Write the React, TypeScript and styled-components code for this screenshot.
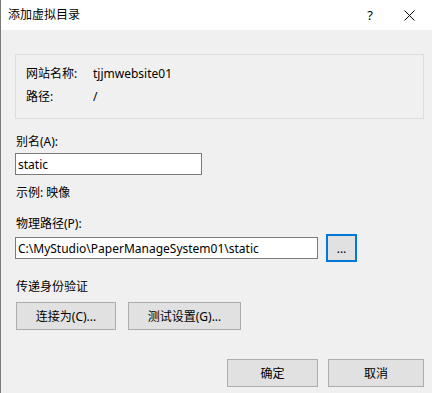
import React from "react";
import styled, { createGlobalStyle } from "styled-components";

const GlobalStyle = createGlobalStyle`
  html, body {
    margin: 0;
    padding: 0;
    background: #f0f0f0;
  }
  * {
    box-sizing: border-box;
  }
`;

const font = `"Noto Sans", "Noto Sans CJK SC", sans-serif`;

const Window = styled.div`
  width: 432px;
  height: 393px;
  background: #f0f0f0;
  border-left: 1px solid #7a7a7a;
  font-family: ${font};
  font-size: 12px;
  color: #000;
  display: flex;
  flex-direction: column;
  overflow: hidden;
`;

const TitleBar = styled.div`
  height: 30px;
  background: #fff;
  display: flex;
  align-items: center;
  padding-left: 7px;
  flex-shrink: 0;
`;

const Title = styled.div`
  flex: 1;
  font-size: 12px;
  line-height: 16px;
`;

const TitleButton = styled.div<{ $w: number }>`
  width: ${(p) => p.$w}px;
  height: 30px;
  display: flex;
  align-items: center;
  justify-content: center;
  font-size: 13px;
`;

const Body = styled.div`
  padding: 0 8px 0 14px;
  display: flex;
  flex-direction: column;
`;

const Group = styled.div`
  margin-top: 24px;
  height: 65px;
  border: 1px solid #dcdcdc;
  padding: 11px 0 0 10px;
  display: flex;
  flex-direction: column;
  gap: 7px;
`;

const InfoRow = styled.div`
  display: flex;
  line-height: 16px;
`;

const InfoLabel = styled.div`
  width: 67px;
`;

const Label = styled.div<{ $mt: number }>`
  margin-top: ${(p) => p.$mt}px;
  line-height: 16px;
  padding-left: 1px;
`;

const TextInput = styled.div<{ $w: number }>`
  width: ${(p) => p.$w}px;
  height: 22px;
  border: 1px solid #7a7a7a;
  background: #fff;
  padding-left: 2px;
  display: flex;
  align-items: center;
  font-size: 12px;
  white-space: nowrap;
  overflow: hidden;
`;

const InputWrap = styled.div`
  margin-top: 3px;
`;

const PathRow = styled.div`
  margin-top: 2px;
  height: 28px;
  display: flex;
  align-items: center;
  gap: 8px;
`;

const Button = styled.div<{ $w: number; $focus?: boolean }>`
  width: ${(p) => p.$w}px;
  height: 28px;
  background: #e1e1e1;
  border: ${(p) => (p.$focus ? "2px solid #0078d7" : "1px solid #adadad")};
  display: flex;
  align-items: center;
  justify-content: center;
  font-size: 12px;
  flex-shrink: 0;
`;

const ButtonRow = styled.div<{ $mt: number; $right?: boolean }>`
  margin-top: ${(p) => p.$mt}px;
  display: flex;
  gap: ${(p) => (p.$right ? 10 : 12)}px;
  justify-content: ${(p) => (p.$right ? "flex-end" : "flex-start")};
  padding-left: ${(p) => (p.$right ? 0 : 1)}px;
`;

export default function App() {
  return (
    <>
      <GlobalStyle />
      <Window>
        <TitleBar>
          <Title>添加虚拟目录</Title>
          <TitleButton $w={32}>?</TitleButton>
          <TitleButton $w={46}>
            <svg width="11" height="11" viewBox="0 0 11 11">
              <path d="M0.5 0.5 L10.5 10.5 M10.5 0.5 L0.5 10.5" stroke="#000" strokeWidth="1" />
            </svg>
          </TitleButton>
        </TitleBar>
        <Body>
          <Group>
            <InfoRow>
              <InfoLabel>网站名称:</InfoLabel>
              <div>tjjmwebsite01</div>
            </InfoRow>
            <InfoRow>
              <InfoLabel>路径:</InfoLabel>
              <div>/</div>
            </InfoRow>
          </Group>
          <Label $mt={15}>别名(A):</Label>
          <InputWrap>
            <TextInput $w={187}>static</TextInput>
          </InputWrap>
          <Label $mt={10}>示例: 映像</Label>
          <Label $mt={15}>物理路径(P):</Label>
          <PathRow>
            <TextInput $w={303}>C:\MyStudio\PaperManageSystem01\static</TextInput>
            <Button $w={31} $focus>...</Button>
          </PathRow>
          <Label $mt={17}>传递身份验证</Label>
          <ButtonRow $mt={7}>
            <Button $w={100}>连接为(C)...</Button>
            <Button $w={113}>测试设置(G)...</Button>
          </ButtonRow>
          <ButtonRow $mt={29} $right>
            <Button $w={91}>确定</Button>
            <Button $w={96}>取消</Button>
          </ButtonRow>
        </Body>
      </Window>
    </>
  );
}
